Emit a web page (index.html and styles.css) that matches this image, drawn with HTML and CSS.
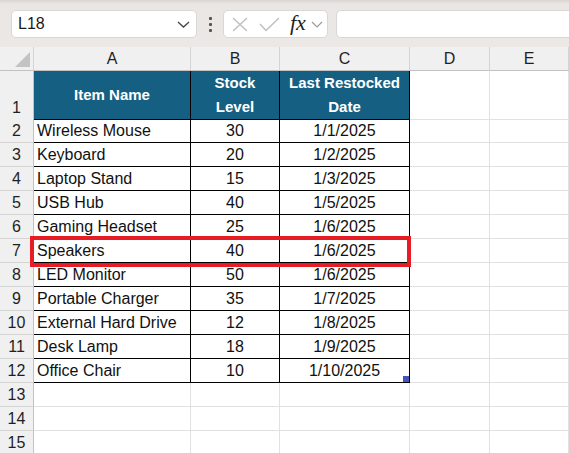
FILE: index.html
```html
<!DOCTYPE html>
<html>
<head>
<meta charset="utf-8">
<link rel="stylesheet" href="styles.css">
</head>
<body>
<div class="toolbar">
  <div class="namebox">
    <span class="ref">L18</span>
    <svg class="chev" width="13" height="7" viewBox="0 0 13 7"><path d="M1 1 L6.5 6 L12 1" fill="none" stroke="#444" stroke-width="1.3"/></svg>
  </div>
  <div class="dots"><i></i><i></i><i></i></div>
  <div class="fxbox">
    <svg class="ico" width="16" height="15" viewBox="0 0 16 15"><path d="M1 1 L15 14 M15 1 L1 14" stroke="#bdbdbd" stroke-width="1.3" fill="none"/></svg>
    <svg class="ico" width="21" height="15" viewBox="0 0 21 15"><path d="M1 7 L7 13.5 L20 1" stroke="#bdbdbd" stroke-width="1.3" fill="none"/></svg>
    <span class="fx">fx</span>
    <svg class="chev2" width="12" height="7" viewBox="0 0 12 7"><path d="M1 1 L6 6 L11 1" fill="none" stroke="#9a9a9a" stroke-width="1.2"/></svg>
  </div>
  <div class="formula"></div>
</div>
<div class="sheet">
  <div class="row hdr">
    <div class="corner"><span class="tri"></span></div>
    <div class="ch">A</div><div class="ch">B</div><div class="ch">C</div><div class="ch">D</div><div class="ch">E</div>
  </div>
  <div class="row r1">
    <div class="rh bottom">1</div>
    <div class="th">Item Name</div>
    <div class="th">Stock<br>Level</div>
    <div class="th">Last Restocked<br>Date</div>
    <div class="gc"></div><div class="gc"></div>
  </div>
  <div class="row"><div class="rh">2</div><div class="td">Wireless Mouse</div><div class="td num">30</div><div class="td num">1/1/2025</div><div class="gc"></div><div class="gc"></div></div>
  <div class="row"><div class="rh">3</div><div class="td">Keyboard</div><div class="td num">20</div><div class="td num">1/2/2025</div><div class="gc"></div><div class="gc"></div></div>
  <div class="row"><div class="rh">4</div><div class="td">Laptop Stand</div><div class="td num">15</div><div class="td num">1/3/2025</div><div class="gc"></div><div class="gc"></div></div>
  <div class="row"><div class="rh">5</div><div class="td">USB Hub</div><div class="td num">40</div><div class="td num">1/5/2025</div><div class="gc"></div><div class="gc"></div></div>
  <div class="row"><div class="rh">6</div><div class="td">Gaming Headset</div><div class="td num">25</div><div class="td num">1/6/2025</div><div class="gc"></div><div class="gc"></div></div>
  <div class="row"><div class="rh">7</div><div class="td">Speakers</div><div class="td num">40</div><div class="td num">1/6/2025</div><div class="gc"></div><div class="gc"></div></div>
  <div class="row"><div class="rh">8</div><div class="td">LED Monitor</div><div class="td num">50</div><div class="td num">1/6/2025</div><div class="gc"></div><div class="gc"></div></div>
  <div class="row"><div class="rh">9</div><div class="td">Portable Charger</div><div class="td num">35</div><div class="td num">1/7/2025</div><div class="gc"></div><div class="gc"></div></div>
  <div class="row"><div class="rh">10</div><div class="td">External Hard Drive</div><div class="td num">12</div><div class="td num">1/8/2025</div><div class="gc"></div><div class="gc"></div></div>
  <div class="row"><div class="rh">11</div><div class="td">Desk Lamp</div><div class="td num">18</div><div class="td num">1/9/2025</div><div class="gc"></div><div class="gc"></div></div>
  <div class="row"><div class="rh">12</div><div class="td">Office Chair</div><div class="td num">10</div><div class="td num">1/10/2025</div><div class="gc"></div><div class="gc"></div></div>
  <div class="row"><div class="rh">13</div><div class="gc"></div><div class="gc"></div><div class="gc"></div><div class="gc"></div><div class="gc"></div></div>
  <div class="row"><div class="rh">14</div><div class="gc"></div><div class="gc"></div><div class="gc"></div><div class="gc"></div><div class="gc"></div></div>
  <div class="row"><div class="rh">15</div><div class="gc"></div><div class="gc"></div><div class="gc"></div><div class="gc"></div><div class="gc"></div></div>
  <div class="highlight"></div>
  <div class="handle"></div>
</div>
</body>
</html>
```
FILE: styles.css
```css
html, body {
  margin: 0;
  padding: 0;
  overflow: hidden;
  background: #ffffff;
  font-family: "Liberation Sans", Arial, sans-serif;
}

.toolbar {
  height: 47px;
  box-sizing: border-box;
  background: linear-gradient(#d9d5d2 0px, #e9e6e3 4px, #ebe8e5 100%);
  display: flex;
  align-items: flex-start;
  padding: 10px 0 0 11px;
}

.namebox {
  width: 186px;
  height: 28px;
  box-sizing: border-box;
  background: #fff;
  border: 1px solid #dad7d4;
  border-radius: 5px;
  display: flex;
  align-items: center;
  justify-content: space-between;
  padding: 0 6px 0 6px;
}

.ref {
  font-size: 16px;
  color: #1a1a1a;
}

.chev { margin-top: 1px; }

.dots {
  width: 27px;
  height: 28px;
  display: flex;
  flex-direction: column;
  align-items: center;
  justify-content: center;
  gap: 3px;
}

.dots i {
  display: block;
  width: 3px;
  height: 3px;
  background: #555;
  border-radius: 1px;
}

.fxbox {
  width: 105px;
  height: 28px;
  box-sizing: border-box;
  background: #fff;
  border: 1px solid #dad7d4;
  border-radius: 5px;
  display: flex;
  align-items: center;
  padding-left: 8px;
  margin-left: -1px;
}

.fxbox .ico { margin-right: 11px; }
.fxbox .ico + .ico { margin-right: 10px; }

.fx {
  font-family: "Liberation Serif", "Times New Roman", serif;
  font-style: italic;
  font-size: 22px;
  color: #222;
  margin-right: 5px;
  line-height: 1;
  margin-top: -2px;
}

.chev2 { margin-top: 1px; }

.formula {
  flex: 1;
  height: 28px;
  margin-left: 8px;
  box-sizing: border-box;
  background: #fff;
  border: 1px solid #dad7d4;
  border-right: none;
  border-radius: 5px 0 0 5px;
}

.sheet {
  position: relative;
}

.row {
  display: grid;
  grid-template-columns: 34px 157px 89px 130px 80px 79px;
  height: 24px;
}

.row > div {
  box-sizing: border-box;
  border-right: 1px solid #e1e1e1;
  border-bottom: 1px solid #e1e1e1;
  display: flex;
  align-items: center;
}

.row.r1 { height: 48px; }

.hdr > div {
  background: #f0f0f0;
  border-right: 1px solid #d4d4d4;
  border-bottom: 1px solid #c2c2c2;
}

.corner {
  position: relative;
}

.tri {
  position: absolute;
  right: 3px;
  bottom: 3px;
  width: 0;
  height: 0;
  border-left: 15px solid transparent;
  border-bottom: 15px solid #c3c3c3;
}

.ch {
  justify-content: center;
  font-size: 16px;
  color: #1f1f1f;
  padding-top: 1px;
}

.row > .rh {
  background: #f0f0f0;
  border-right: 1px solid #c2c2c2;
  border-bottom: 1px solid #d4d4d4;
  justify-content: center;
  font-size: 16px;
  color: #1f1f1f;
  padding-top: 1px;
}

.row > .rh.bottom {
  align-items: flex-end;
  padding-bottom: 2px;
}

.row > .th {
  background: #156082;
  color: #ffffff;
  font-weight: bold;
  font-size: 15px;
  line-height: 24px;
  text-align: center;
  justify-content: center;
  border-right: 1px solid #000;
  border-bottom: 1px solid #000;
}

.row > .td {
  font-size: 16px;
  color: #111;
  padding-left: 3px;
  padding-top: 1px;
  border-right: 1px solid #000;
  border-bottom: 1px solid #000;
  white-space: nowrap;
}

.row > .td.num {
  justify-content: center;
  padding-left: 0;
}

.highlight {
  position: absolute;
  left: 30px;
  top: 189px;
  width: 381px;
  height: 31px;
  box-sizing: border-box;
  border: 4px solid #e71d25;
}

.handle {
  position: absolute;
  left: 403px;
  top: 329px;
  width: 6px;
  height: 6px;
  background: #4456b8;
}
```
